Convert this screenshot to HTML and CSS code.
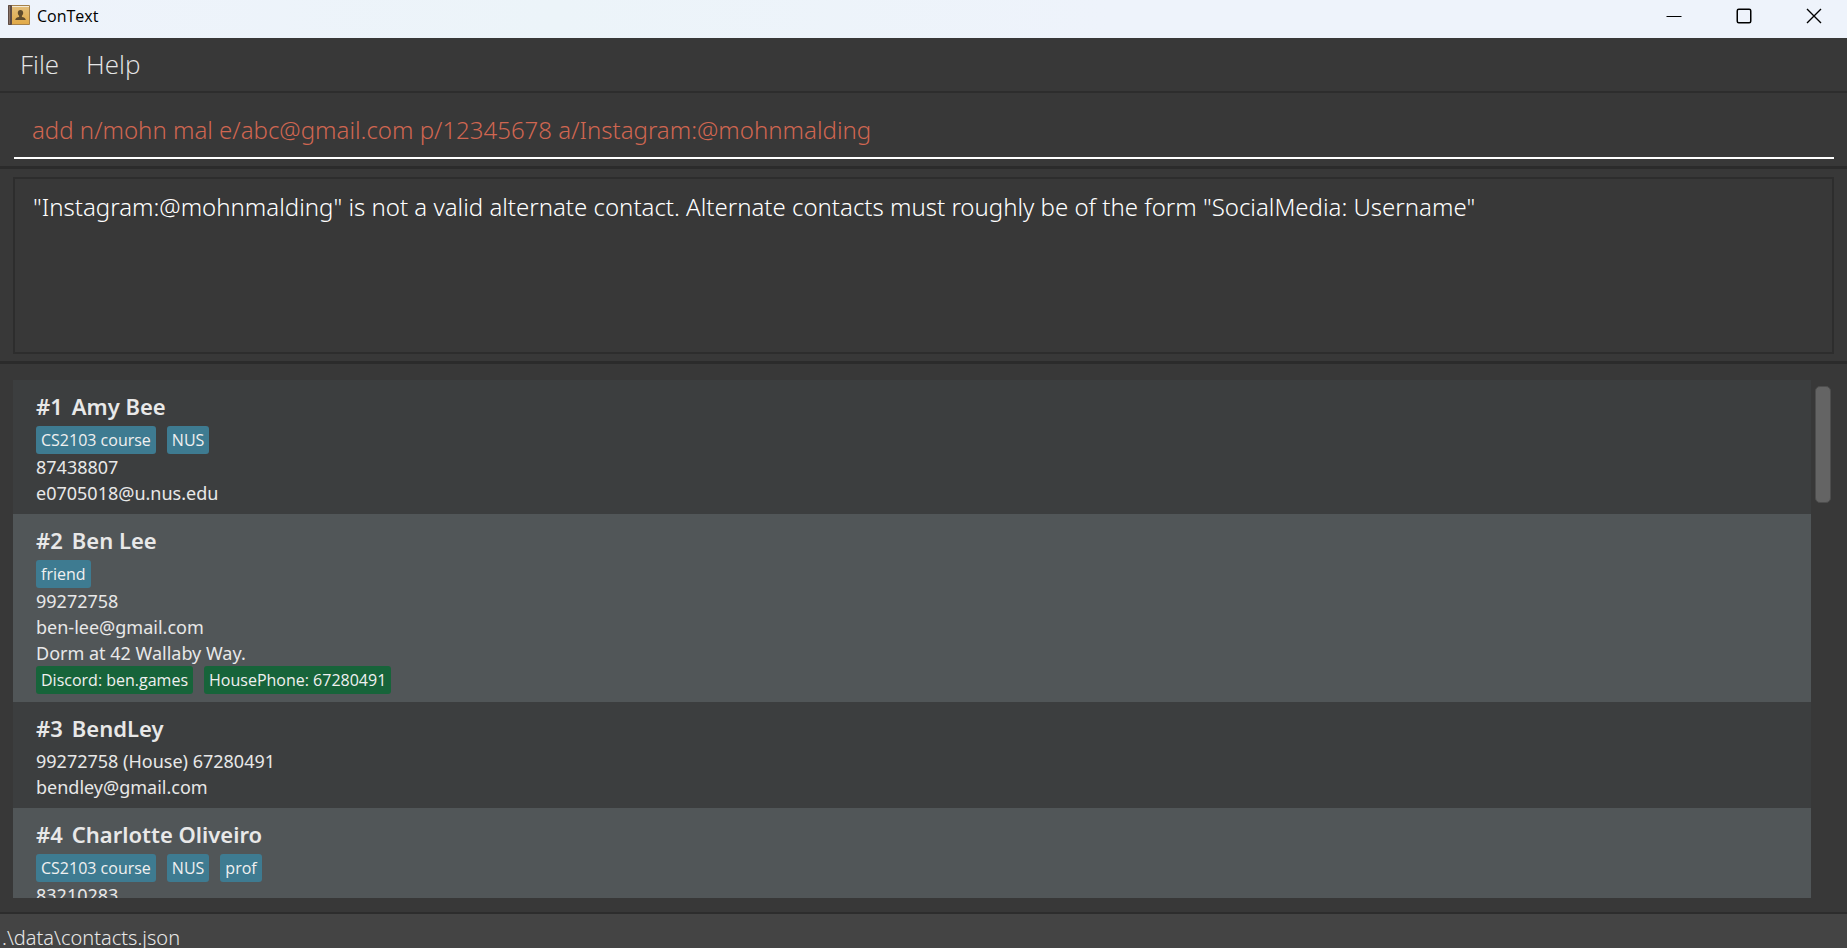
FILE: index.html
```html
<!DOCTYPE html>
<html lang="en">
<head>
<meta charset="utf-8">
<title>ConText</title>
<link rel="stylesheet" href="styles.css">
</head>
<body>
<header class="titlebar">
  <svg class="app-icon" viewBox="0 0 22 20" aria-hidden="true">
    <defs>
      <linearGradient id="cover" x1="0" y1="0" x2="0" y2="1">
        <stop offset="0" stop-color="#e3bd78"/>
        <stop offset="1" stop-color="#e2aa47"/>
      </linearGradient>
    </defs>
    <rect x="0" y="0" width="22" height="20" rx="1" fill="#a5804a"/>
    <rect x="4" y="1" width="17" height="1" fill="#f4ead6"/>
    <rect x="4" y="2" width="17" height="17" fill="url(#cover)"/>
    <rect x="0" y="0" width="4" height="20" rx="1" fill="#5d4b45"/>
    <rect x="1" y="1" width="1" height="18" fill="#8a7468"/>
    <path d="M12.500 5c1.700 0 2.700 1.100 2.700 2.800 0 1.400-.6 2.300-1.300 2.900v1.200c1.700.4 3.700.9 3.900 3.100H7.200c.2-2.200 2.200-2.700 3.900-3.100v-1.200c-.7-.6-1.300-1.500-1.300-2.900C9.800 6.100 10.800 5 12.500 5z" fill="#5f4a2c"/>
  </svg>
  <h1 class="app-title">ConText</h1>
  <div class="window-controls">
    <button class="window-button" type="button" aria-label="Minimize">
      <svg class="window-glyph" viewBox="0 0 16 16"><path d="M.5 8.500h15" stroke="#000" fill="none"/></svg>
    </button>
    <button class="window-button" type="button" aria-label="Maximize">
      <svg class="window-glyph" viewBox="0 0 16 16"><rect x="1.250" y="1.250" width="13.500" height="13.500" rx="1.500" stroke="#000" stroke-width="1.500" fill="none"/></svg>
    </button>
    <button class="window-button" type="button" aria-label="Close">
      <svg class="window-glyph" viewBox="0 0 16 16"><path d="M1 1l14 14M15 1L1 15" stroke="#000" stroke-width="1.400" fill="none"/></svg>
    </button>
  </div>
</header>
<nav class="menubar">
  <button class="menu" type="button">File</button>
  <button class="menu" type="button">Help</button>
</nav>
<main class="content">
  <section class="command-pane">
    <input class="command-box" type="text" aria-label="Command" value="add n/mohn mal e/abc@gmail.com p/12345678 a/Instagram:@mohnmalding">
  </section>
  <section class="result-pane">
    <textarea class="result-box" aria-label="Result" readonly>"Instagram:@mohnmalding" is not a valid alternate contact. Alternate contacts must roughly be of the form "SocialMedia: Username"</textarea>
  </section>
  <section class="list-pane">
    <ul class="contacts">
      <li class="contact">
        <h2 class="name"><span>#1</span><span>Amy Bee</span></h2>
        <div class="chips"><span class="chip">CS2103 course</span><span class="chip">NUS</span></div>
        <p class="detail">87438807</p>
        <p class="detail">e0705018@u.nus.edu</p>
      </li>
      <li class="contact">
        <h2 class="name"><span>#2</span><span>Ben Lee</span></h2>
        <div class="chips"><span class="chip">friend</span></div>
        <p class="detail">99272758</p>
        <p class="detail">ben-lee@gmail.com</p>
        <p class="detail">Dorm at 42 Wallaby Way.</p>
        <div class="chips"><span class="chip alternate">Discord: ben.games</span><span class="chip alternate">HousePhone: 67280491</span></div>
      </li>
      <li class="contact">
        <h2 class="name"><span>#3</span><span>BendLey</span></h2>
        <p class="detail">99272758 (House) 67280491</p>
        <p class="detail">bendley@gmail.com</p>
      </li>
      <li class="contact">
        <h2 class="name"><span>#4</span><span>Charlotte Oliveiro</span></h2>
        <div class="chips"><span class="chip">CS2103 course</span><span class="chip">NUS</span><span class="chip">prof</span></div>
        <p class="detail">83210283</p>
      </li>
    </ul>
    <div class="scrollbar"><div class="thumb"></div></div>
  </section>
</main>
<footer class="statusbar">.\data\contacts.json</footer>
</body>
</html>
```
FILE: styles.css
```css
* {
  box-sizing: border-box;
}

body {
  margin: 0;
  height: 100vh;
  display: flex;
  flex-direction: column;
  overflow: hidden;
  background: #383838;
  color: #e8e8e8;
  font-family: "Noto Sans", "Open Sans", sans-serif;
}

h1,
h2,
p,
ul {
  margin: 0;
  padding: 0;
  font-weight: inherit;
}

button,
input,
textarea {
  margin: 0;
  padding: 0;
  border: 0;
  background: none;
  font-family: inherit;
}

.titlebar {
  flex: none;
  display: flex;
  align-items: flex-start;
  height: 38px;
  padding-left: 8px;
  background: linear-gradient(90deg, #eef3fb, #ecf4f9 30%, #eef3fb 60%);
  color: #000000;
}

.app-icon {
  width: 22px;
  height: 20px;
  margin: 5px 7px 0 0;
}

.app-title {
  font-family: "Open Sans", sans-serif;
  font-size: 16px;
  line-height: 32px;
}

.window-controls {
  display: flex;
  margin-left: auto;
}

.window-button {
  display: flex;
  align-items: center;
  justify-content: center;
  width: 70px;
  height: 32px;
}

.window-button:last-child {
  width: 68px;
  padding-left: 2px;
}

.window-glyph {
  width: 16px;
  height: 16px;
}

.menubar {
  flex: none;
  display: flex;
  gap: 27px;
  height: 55px;
  padding: 0 20px 2px;
  border-bottom: 2px solid #2d2d2d;
}

.menu {
  color: #e6e6e6;
  font-family: "Open Sans", sans-serif;
  font-size: 26px;
  font-weight: 300;
}

.content {
  flex: 1;
  min-height: 0;
  display: flex;
  flex-direction: column;
}

.command-pane {
  padding: 8px 13px 7px 14px;
  border-bottom: 3px solid #2b2b2b;
}

.command-box {
  display: block;
  width: 100%;
  height: 58px;
  padding: 0 18px;
  border-bottom: 2px solid #ffffff;
  color: #d06651;
  font-size: 24px;
  font-weight: 300;
}

.result-pane {
  padding: 8px 13px 7px;
  border-bottom: 3px solid #2b2b2b;
}

.result-box {
  display: block;
  width: 100%;
  height: 177px;
  padding: 11px 18px;
  border: 2px solid #2d2d2d;
  resize: none;
  overflow: hidden;
  color: #ffffff;
  font-size: 24px;
  font-weight: 300;
  line-height: 34px;
}

.list-pane {
  flex: 1;
  min-height: 0;
  display: flex;
  padding: 16px 16px 14px 13px;
}

.contacts {
  flex: 1;
  overflow: hidden;
  list-style: none;
}

.contact {
  padding: 8px 23px;
  background: #3c3e3f;
}

.contact:nth-child(even) {
  background: #515658;
}

.name {
  display: flex;
  gap: 9px;
  margin-bottom: 2px;
  font-size: 22px;
  font-weight: 600;
  line-height: 36px;
}

.chips {
  display: flex;
  gap: 11px;
}

.chip {
  padding: 0 5px;
  border-radius: 3px;
  background: #3e7b91;
  color: #f0f0f0;
  font-family: "Open Sans", sans-serif;
  font-size: 16px;
  font-weight: 500;
  line-height: 28px;
}

.chip.alternate {
  background: #17643a;
}

.detail {
  font-size: 18px;
  line-height: 26px;
}

.scrollbar {
  flex: none;
  width: 20px;
  padding: 6px 0 0 4px;
}

.thumb {
  height: 117px;
  border: 1px solid #4d4d4d;
  border-radius: 5px;
  background: #646464;
}

.statusbar {
  flex: none;
  height: 36px;
  padding: 7px 2px 0;
  border-top: 2px solid #2d2d2d;
  background: #444444;
  font-size: 20px;
  font-weight: 300;
  line-height: 34px;
}
```
